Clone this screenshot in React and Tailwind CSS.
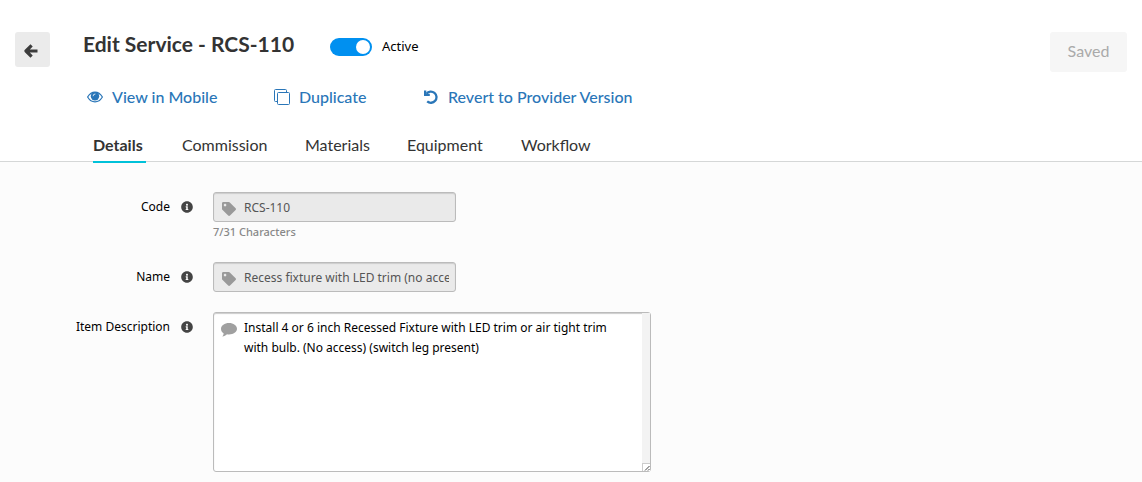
import React, { useState } from "react";
import { FaInfoCircle, FaTag } from "react-icons/fa";

const tabs = [
  { name: "Details", width: "w-[53px]" },
  { name: "Commission", width: "w-[87px]" },
  { name: "Materials", width: "w-[66px]" },
  { name: "Equipment", width: "w-[78px]" },
  { name: "Workflow", width: "w-[72px]" },
];

const ArrowIcon = () => (
  <svg viewBox="0 0 14 14" className="h-3.5 w-3.5" fill="none" stroke="#3c3c3c" strokeWidth="3.200" aria-hidden="true">
    <path d="M7.600 1.400 2 7l5.600 5.600M2.500 7h11" strokeLinejoin="round" />
  </svg>
);

const EyeIcon = () => (
  <svg viewBox="0 0 16 12" className="h-3 w-4" aria-hidden="true">
    <path d="M.6 6C2.400 3 5 1.100 8 1.100S13.600 3 15.400 6c-1.800 3-4.400 4.900-7.400 4.900S2.400 9 .6 6z" fill="none" stroke="currentColor" strokeWidth="1.200" />
    <circle cx="8" cy="5.300" r="4.200" fill="currentColor" />
    <path d="M6.100 4.800A1.800 1.800 0 0 1 8 3" fill="none" stroke="#fff" strokeWidth=".8" strokeLinecap="round" />
  </svg>
);

const CopyIcon = () => (
  <svg viewBox="0 0 16 16" className="h-4 w-4" fill="none" stroke="currentColor" aria-hidden="true">
    <rect x="3.500" y="3.500" width="12" height="12" rx="1" />
    <path d="M3.500 12.500h-2a1 1 0 0 1-1-1v-10a1 1 0 0 1 1-1h10a1 1 0 0 1 1 1v2" />
  </svg>
);

const UndoIcon = () => (
  <svg viewBox="0 0 14 14" className="h-3.5 w-3.5" aria-hidden="true">
    <path d="M2.500 3.700A5.600 5.600 0 1 1 3.200 11.400" fill="none" stroke="currentColor" strokeWidth="2.300" />
    <path d="M0 .400v5.600h5.800V3.800H2.300V.400z" fill="currentColor" />
  </svg>
);

const CommentIcon = () => (
  <svg viewBox="0 0 16 14" className="absolute top-[11px] left-2 h-3.5 w-4 text-[#a0a0a0]" fill="currentColor" aria-hidden="true">
    <path d="M8 0c4.400 0 8 2.500 8 5.700s-3.600 5.700-8 5.700c-.7 0-1.400-.1-2-.2-1.200 1.200-2.700 1.900-4.700 2.200.7-.8 1.200-1.800 1.400-3C1 9.300 0 7.600 0 5.700 0 2.500 3.600 0 8 0z" />
  </svg>
);

const Label = ({ htmlFor, children }) => (
  <div className="flex h-[30px] w-[179px] shrink-0 items-center justify-end gap-[11px]">
    <label htmlFor={htmlFor} className="text-xs leading-5 text-black">
      {children}
    </label>
    <FaInfoCircle className="h-3 w-3 text-[#444]" />
  </div>
);

const TextField = ({ id, value }) => (
  <div className="relative w-[243px]">
    <FaTag className="absolute top-2.5 left-[9px] h-3.5 w-3.5 text-[#999]" />
    <input
      id={id}
      value={value}
      disabled
      className="block h-[30px] w-full rounded-[3px] border border-[#bbb] bg-[#eaeaea] pr-1.5 pl-[30px] text-xs text-[#555] shadow-[inset_0_1px_1px_#ccc]"
    />
  </div>
);

const EditService = () => {
  const [active, setActive] = useState(true);
  const [tab, setTab] = useState("Details");
  const [description, setDescription] = useState(
    "Install 4 or 6 inch Recessed Fixture with LED trim or air tight trim with bulb. (No access) (switch leg present)"
  );

  return (
    <div className="min-h-screen bg-[#fcfcfc] font-['Noto_Sans',sans-serif]">
      <header className="border-b border-[#d5d7d7] bg-white font-['Lato',sans-serif]">
        <div className="flex items-start px-[15px] pt-8">
          <button aria-label="Back" className="flex h-[35px] w-[35px] items-center justify-center rounded-[3px] bg-[#ebebeb] pt-0.5 pr-1">
            <ArrowIcon />
          </button>
          <div className="ml-[33px] flex-1">
            <div className="flex h-6 items-center">
              <h1 className="w-[247px] text-[21px] leading-6 font-bold text-[#333]">Edit Service - RCS-110</h1>
              <label className="flex items-center gap-2.5 pt-1.5 font-['Noto_Sans',sans-serif] text-[13px] text-black">
                <input
                  type="checkbox"
                  role="switch"
                  checked={active}
                  onChange={(e) => setActive(e.target.checked)}
                  className="flex h-[18px] w-[42px] appearance-none items-center rounded-full bg-[#ccc] px-0.5 before:h-3.5 before:w-3.5 before:rounded-full before:bg-white checked:justify-end checked:bg-[#0090f0]"
                />
                Active
              </label>
            </div>
            <nav className="mt-[29px] flex h-6 items-center pl-1 text-base leading-6 font-medium text-[#2a76b8]">
              <a href="#mobile" className="flex w-[187px] items-center gap-[9px]">
                <EyeIcon />
                View in Mobile
              </a>
              <a href="#duplicate" className="flex w-[150px] items-center gap-[9px]">
                <CopyIcon />
                Duplicate
              </a>
              <a href="#revert" className="flex items-center gap-2.5">
                <UndoIcon />
                Revert to Provider Version
              </a>
            </nav>
          </div>
          <button disabled className="h-10 w-[77px] rounded-[3px] bg-[#f6f6f6] pb-0.5 text-base text-[#aaa]">
            Saved
          </button>
        </div>
        <div className="-mb-0.5 flex gap-9 pt-6 pl-[93px]">
          {tabs.map((t) => (
            <button
              key={t.name}
              onClick={() => setTab(t.name)}
              className={`${t.width} h-[30px] border-b-2 pb-1 text-left text-base leading-6 whitespace-nowrap text-[#333] ${
                tab === t.name ? "border-[#00c1d9] font-bold" : "border-transparent"
              }`}
            >
              {t.name}
            </button>
          ))}
        </div>
      </header>

      <main className="flex flex-col gap-5 pt-[30px] pb-2.5 pl-3.5">
        <div className="flex gap-5">
          <Label htmlFor="code">Code</Label>
          <div>
            <TextField id="code" value="RCS-110" />
            <p className="mt-0.5 -mb-1 h-[22px] text-[11px] leading-4 font-medium text-[#888]">7/31 Characters</p>
          </div>
        </div>
        <div className="flex gap-5">
          <Label htmlFor="name">Name</Label>
          <TextField id="name" value="Recess fixture with LED trim (no access)" />
        </div>
        <div className="flex gap-5">
          <Label htmlFor="description">Item Description</Label>
          <div className="relative w-[438px]">
            <CommentIcon />
            <textarea
              id="description"
              value={description}
              onChange={(e) => setDescription(e.target.value)}
              className="block h-40 w-full resize-none rounded-[3px] border border-[#bbb] bg-white py-[5px] pr-5 pl-[30px] text-xs leading-5 text-black shadow-[inset_0_1px_1px_#ccc]"
            />
            {/* scroll track and resize grip */}
            <div className="pointer-events-none absolute inset-y-px right-px flex w-2 flex-col">
              <div className="flex-1 bg-[#f3f3f3]" />
              <div className="h-2 border-t border-l border-[#ccc] bg-white">
                <svg viewBox="0 0 7 7" className="h-[7px] w-[7px]" stroke="#444" aria-hidden="true">
                  <path d="M2 6.500 6.500 2M5 6.500 6.500 5" />
                </svg>
              </div>
            </div>
          </div>
        </div>
      </main>
    </div>
  );
};

export default EditService;
